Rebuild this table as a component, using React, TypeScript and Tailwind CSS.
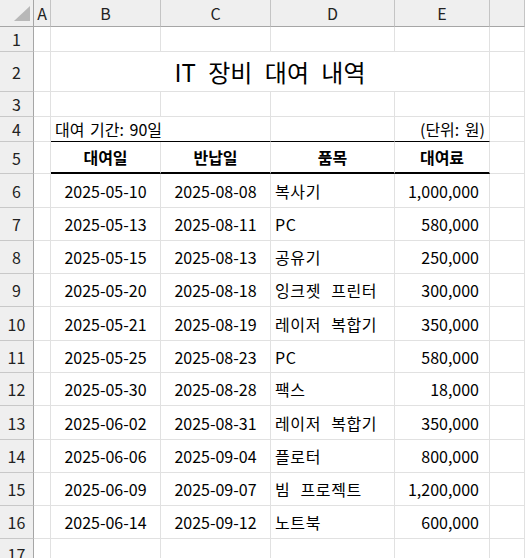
import React from "react";

const rentals = [
  { start: "2025-05-10", end: "2025-08-08", item: "복사기", fee: "1,000,000", h: "h-[34px]" },
  { start: "2025-05-13", end: "2025-08-11", item: "PC", fee: "580,000", h: "h-[33px]" },
  { start: "2025-05-15", end: "2025-08-13", item: "공유기", fee: "250,000", h: "h-[33px]" },
  { start: "2025-05-20", end: "2025-08-18", item: "잉크젯 프린터", fee: "300,000", h: "h-[33px]" },
  { start: "2025-05-21", end: "2025-08-19", item: "레이저 복합기", fee: "350,000", h: "h-[34px]" },
  { start: "2025-05-25", end: "2025-08-23", item: "PC", fee: "580,000", h: "h-[32px]" },
  { start: "2025-05-30", end: "2025-08-28", item: "팩스", fee: "18,000", h: "h-[33px]" },
  { start: "2025-06-02", end: "2025-08-31", item: "레이저 복합기", fee: "350,000", h: "h-[34px]" },
  { start: "2025-06-06", end: "2025-09-04", item: "플로터", fee: "800,000", h: "h-[33px]" },
  { start: "2025-06-09", end: "2025-09-07", item: "빔 프로젝트", fee: "1,200,000", h: "h-[33px]" },
  { start: "2025-06-14", end: "2025-09-12", item: "노트북", fee: "600,000", h: "h-[33px]" },
];

const grid = "border-r border-b border-[#e1e1e1]";

function RowHead({ n }: { n: number }) {
  return (
    <div className="w-[34px] shrink-0 flex items-center justify-center bg-[#efefef] border-r border-r-[#a6a6a6] border-b border-b-[#c8c8c8] leading-none text-[#222]">
      {n}
    </div>
  );
}

function ColHead({ label, className }: { label: string; className: string }) {
  return (
    <div className={`${className} shrink-0 flex items-center justify-center bg-[#efefef] border-r border-r-[#c4c4c4] border-b border-b-[#a6a6a6] leading-none text-[#222]`}>
      {label}
    </div>
  );
}

export default function App() {
  return (
    <div className="w-[525px] h-[558px] overflow-hidden bg-white font-['Noto_Sans_CJK_KR',sans-serif] text-[16px] text-black">
      {/* column headers */}
      <div className="flex h-[27px]">
        <div className="w-[34px] shrink-0 bg-[#efefef] border-r border-b border-[#a6a6a6]">
          <svg width="33" height="26" viewBox="0 0 33 26">
            <polygon points="30,6 30,21 14,21" fill="#b8b8b8" />
          </svg>
        </div>
        <ColHead label="A" className="w-[17px]" />
        <ColHead label="B" className="w-[110px]" />
        <ColHead label="C" className="w-[110px]" />
        <ColHead label="D" className="w-[124px]" />
        <ColHead label="E" className="w-[95px]" />
        <ColHead label="" className="flex-1" />
      </div>

      {/* row 1 */}
      <div className="flex h-[25px]">
        <RowHead n={1} />
        <div className={`w-[17px] ${grid}`} />
        <div className={`w-[110px] ${grid}`} />
        <div className={`w-[110px] ${grid}`} />
        <div className={`w-[124px] ${grid}`} />
        <div className={`w-[95px] ${grid}`} />
        <div className={`flex-1 ${grid}`} />
      </div>

      {/* row 2: title */}
      <div className="flex h-[40px]">
        <RowHead n={2} />
        <div className={`w-[17px] ${grid}`} />
        <div className={`w-[439px] ${grid} flex items-center justify-center text-[24px] leading-none [word-spacing:7px]`}>
          IT 장비 대여 내역
        </div>
        <div className={`flex-1 ${grid}`} />
      </div>

      {/* row 3 */}
      <div className="flex h-[25px]">
        <RowHead n={3} />
        <div className={`w-[17px] ${grid}`} />
        <div className={`w-[110px] ${grid}`} />
        <div className={`w-[110px] ${grid}`} />
        <div className={`w-[124px] ${grid}`} />
        <div className={`w-[95px] ${grid}`} />
        <div className={`flex-1 ${grid}`} />
      </div>

      {/* row 4 */}
      <div className="flex h-[25px]">
        <RowHead n={4} />
        <div className={`w-[17px] ${grid}`} />
        <div className="w-[110px] border-b border-black flex items-center pl-[4px] whitespace-nowrap leading-none [word-spacing:2px]">
          대여 기간: 90일
        </div>
        <div className="w-[110px] border-r border-r-[#e1e1e1] border-b border-b-black" />
        <div className="w-[124px] border-r border-r-[#e1e1e1] border-b border-b-black" />
        <div className="w-[95px] border-r border-r-[#e1e1e1] border-b border-b-black flex items-center justify-end pr-[4px] whitespace-nowrap leading-none [word-spacing:2px]">
          (단위: 원)
        </div>
        <div className={`flex-1 ${grid}`} />
      </div>

      {/* row 5: table header */}
      <div className="flex h-[32px]">
        <RowHead n={5} />
        <div className={`w-[17px] ${grid}`} />
        {["대여일", "반납일", "품목", "대여료"].map((label, i) => (
          <div
            key={label}
            className={`${["w-[110px]", "w-[110px]", "w-[124px]", "w-[95px]"][i]} border-r border-r-[#e1e1e1] border-b-2 border-b-black flex items-center justify-center font-bold leading-none`}
          >
            {label}
          </div>
        ))}
        <div className={`flex-1 ${grid}`} />
      </div>

      {/* data rows */}
      {rentals.map((r, i) => (
        <div key={i} className={`flex ${r.h}`}>
          <RowHead n={i + 6} />
          <div className={`w-[17px] ${grid}`} />
          <div className={`w-[110px] ${grid} flex items-center justify-center leading-none`}>{r.start}</div>
          <div className={`w-[110px] ${grid} flex items-center justify-center leading-none`}>{r.end}</div>
          <div className={`w-[124px] ${grid} flex items-center pl-[4px] leading-none whitespace-nowrap [word-spacing:6px] tracking-[0.6px]`}>{r.item}</div>
          <div className={`w-[95px] ${grid} flex items-center justify-end pr-[10px] leading-none`}>{r.fee}</div>
          <div className={`flex-1 ${grid}`} />
        </div>
      ))}

      {/* row 17 */}
      <div className="flex h-[30px]">
        <RowHead n={17} />
        <div className={`w-[17px] ${grid}`} />
        <div className={`w-[110px] ${grid}`} />
        <div className={`w-[110px] ${grid}`} />
        <div className={`w-[124px] ${grid}`} />
        <div className={`w-[95px] ${grid}`} />
        <div className={`flex-1 ${grid}`} />
      </div>
    </div>
  );
}
